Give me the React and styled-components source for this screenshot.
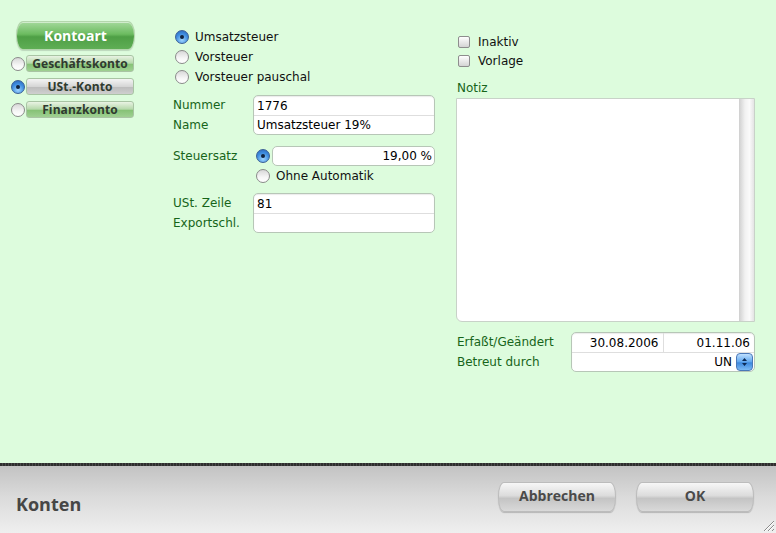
import React, { useState } from 'react';
import styled, { createGlobalStyle, css } from 'styled-components';

const GlobalStyle = createGlobalStyle`
  html, body { margin: 0; padding: 0; }
  body {
    width: 776px;
    height: 533px;
    overflow: hidden;
    font-family: "DejaVu Sans", Verdana, sans-serif;
    font-size: 12px;
  }
`;

const Window = styled.div`
  display: flex;
  flex-direction: column;
  width: 776px;
  height: 533px;
`;

const Main = styled.div`
  height: 463px;
  background: #ddfcdd;
  display: grid;
  grid-template-columns: 126px 264px 300px;
  column-gap: 35px;
  padding-left: 11px;
  box-sizing: border-box;
  & > :nth-child(3) { margin-left: -15px; }
`;

const Column = styled.div`
  display: flex;
  flex-direction: column;
  padding-top: ${p => p.$top}px;
`;

/* ---- left column ---- */

const KontoartButton = styled.div`
  margin-left: 5px;
  width: 119px;
  height: 29px;
  box-sizing: border-box;
  border-radius: 7px / 14px;
  border: 1px solid #b4d6ad;
  background: linear-gradient(#a4d99c 0%, #6cbb60 45%, #4e9f45 55%, #5fae55 100%);
  box-shadow: inset 0 1px 0 rgba(255,255,255,0.5), 0 1px 1px rgba(0,0,0,0.15);
  display: flex;
  align-items: center;
  justify-content: center;
  color: #fff;
  font-family: "Open Sans", "Liberation Sans", sans-serif;
  font-weight: 700;
  font-size: 14px;
`;

const KindList = styled.div`
  display: flex;
  flex-direction: column;
  gap: 6px;
  margin-top: 5px;
`;

const KindRow = styled.div`
  display: flex;
  align-items: center;
  gap: 1px;
`;

const KindButton = styled.div`
  width: 108px;
  height: 17px;
  box-sizing: border-box;
  border-radius: 3px;
  border: 1px solid #a9c4a4;
  display: flex;
  align-items: center;
  justify-content: center;
  font-family: "Open Sans", "Liberation Sans", sans-serif;
  font-weight: 700;
  font-size: 12px;
  color: #2f3a2f;
  letter-spacing: 0.1px;
  ${p => p.$active
    ? css`background: linear-gradient(#f4f4f4 0%, #d6d6d6 50%, #bdbdbd 55%, #cfcfcf 100%);`
    : css`background: linear-gradient(#e9f3e4 0%, #b6d9ab 48%, #86c276 55%, #9fd092 100%);`}
`;

/* ---- radios & checkboxes ---- */

const Radio = styled.span`
  flex: none;
  width: 14px;
  height: 14px;
  box-sizing: border-box;
  border-radius: 50%;
  border: 1px solid #8a8a8a;
  display: inline-flex;
  align-items: center;
  justify-content: center;
  ${p => p.$on
    ? css`
      background: radial-gradient(circle at 50% 75%, #9fd4ff 0%, #3f8ee0 55%, #2a63b8 100%);
      border-color: #3a5f96;
      &::after {
        content: "";
        width: 4px;
        height: 4px;
        border-radius: 50%;
        background: #10233f;
      }`
    : css`background: linear-gradient(#d8d8d8 0%, #f6f6f6 60%, #ffffff 100%);`}
`;

const Check = styled.span`
  flex: none;
  width: 12px;
  height: 12px;
  box-sizing: border-box;
  border-radius: 2px;
  border: 1px solid #8d8d8d;
  background: linear-gradient(#ffffff 0%, #e9e9e9 50%, #d4d4d4 100%);
`;

const OptionRow = styled.div`
  display: flex;
  align-items: center;
  height: ${p => p.$h || 20}px;
  gap: 6px;
  padding-left: ${p => p.$indent || 3}px;
  color: #111;
`;

const CheckText = styled.span`
  margin-left: 2px;
`;

/* ---- fields ---- */

const FieldBlock = styled.div`
  display: flex;
  margin-top: ${p => p.$mt || 0}px;
`;

const Labels = styled.div`
  width: ${p => p.$w}px;
  flex: none;
  display: flex;
  flex-direction: column;
`;

const Label = styled.div`
  height: 20px;
  line-height: 20px;
  color: #17651a;
  padding-left: 1px;
`;

const Box = styled.div`
  width: ${p => p.$w}px;
  box-sizing: border-box;
  background: #fff;
  border: 1px solid #b7c6b7;
  border-radius: 5px;
  box-shadow: inset 0 1px 1px rgba(0,0,0,0.08);
  display: flex;
  flex-direction: column;
  overflow: hidden;
`;

const BoxRow = styled.div`
  height: 19px;
  display: flex;
  align-items: center;
  box-sizing: border-box;
  padding: 0 ${p => p.$pr ?? 4}px 0 ${p => p.$pl ?? 3}px;
  justify-content: ${p => p.$right ? 'flex-end' : 'flex-start'};
  color: #000;
  & + & { border-top: 1px solid #dedede; height: 19px; }
`;

const Cell = styled.div`
  flex: 1;
  height: 100%;
  display: flex;
  align-items: center;
  justify-content: flex-end;
  padding-right: 4px;
  & + & { border-left: 1px solid #dedede; }
`;

const RateRow = styled.div`
  display: flex;
  align-items: center;
  margin-top: 11px;
`;

const RateInput = styled.div`
  width: 163px;
  height: 20px;
  margin-left: 2px;
  box-sizing: border-box;
  background: #fff;
  border: 1px solid #b7c6b7;
  border-radius: 5px;
  display: flex;
  align-items: center;
  justify-content: flex-end;
  padding-right: 2px;
`;

/* ---- right column ---- */

const NoteLabel = styled.div`
  color: #17651a;
  height: 20px;
  line-height: 20px;
  margin-top: 7px;
  padding-left: 1px;
`;

const NoteArea = styled.div`
  width: 299px;
  height: 224px;
  box-sizing: border-box;
  background: #fff;
  border: 1px solid #c8d2c8;
  border-radius: 0 0 0 6px;
  display: flex;
  justify-content: flex-end;
`;

const Scrollbar = styled.div`
  width: 15px;
  height: 100%;
  background: linear-gradient(90deg, #cfcfcf 0%, #f1f1f1 40%, #fafafa 70%, #e4e4e4 100%);
`;

const Stepper = styled.div`
  width: 17px;
  height: 18px;
  margin-left: 4px;
  box-sizing: border-box;
  border-radius: 4px;
  border: 1px solid #4a78b8;
  background: linear-gradient(#bfe0ff 0%, #5fa6ee 50%, #3c87dc 55%, #7cbaf5 100%);
  display: flex;
  align-items: center;
  justify-content: center;
`;

/* ---- footer ---- */

const Divider = styled.div`
  height: 3px;
  background: repeating-linear-gradient(90deg, #2e2e2e 0 2px, #4a4a4a 2px 3px);
`;

const Footer = styled.div`
  flex: 1;
  position: relative;
  background: linear-gradient(#c3c3c3 0%, #dadada 45%, #efefef 100%);
  display: flex;
  align-items: center;
  padding: 0 22px 0 16px;
`;

const Title = styled.div`
  font-family: "Open Sans", "Liberation Sans", sans-serif;
  font-weight: 700;
  font-size: 18px;
  color: #464646;
  margin-top: 8px;
  flex: 1;
`;

const Buttons = styled.div`
  display: flex;
  gap: 20px;
  margin-bottom: 5px;
`;

const FooterButton = styled.div`
  width: 118px;
  height: 30px;
  box-sizing: border-box;
  border-radius: 6px / 14px;
  border: 1px solid #bcbcbc;
  background: linear-gradient(#f7f7f7 0%, #dcdcdc 45%, #c4c4c4 55%, #d9d9d9 100%);
  box-shadow: 0 1px 1px rgba(0,0,0,0.2);
  display: flex;
  align-items: center;
  justify-content: center;
  padding-bottom: 3px;
  font-family: "Open Sans", "Liberation Sans", sans-serif;
  font-weight: 700;
  font-size: 14px;
  color: #4a4a4a;
`;

const Grip = styled.svg`
  position: absolute;
  right: 1px;
  bottom: 1px;
`;

const kinds = ['Geschäftskonto', 'USt.-Konto', 'Finanzkonto'];
const taxTypes = ['Umsatzsteuer', 'Vorsteuer', 'Vorsteuer pauschal'];

export default function App() {
  const [kind, setKind] = useState(1);
  const [tax, setTax] = useState(0);

  return (
    <>
      <GlobalStyle />
      <Window>
        <Main>
          <Column $top={21}>
            <KontoartButton>Kontoart</KontoartButton>
            <KindList>
              {kinds.map((k, i) => (
                <KindRow key={k} onClick={() => setKind(i)}>
                  <Radio $on={kind === i} />
                  <KindButton $active={kind === i}>{k}</KindButton>
                </KindRow>
              ))}
            </KindList>
          </Column>

          <Column $top={27}>
            {taxTypes.map((t, i) => (
              <OptionRow key={t} onClick={() => setTax(i)}>
                <Radio $on={tax === i} />
                {t}
              </OptionRow>
            ))}
            <FieldBlock $mt={8}>
              <Labels $w={81}>
                <Label>Nummer</Label>
                <Label>Name</Label>
              </Labels>
              <Box $w={182}>
                <BoxRow>1776</BoxRow>
                <BoxRow>Umsatzsteuer 19%</BoxRow>
              </Box>
            </FieldBlock>
            <RateRow>
              <Labels $w={84}>
                <Label>Steuersatz</Label>
              </Labels>
              <Radio $on />
              <RateInput>19,00 %</RateInput>
            </RateRow>
            <OptionRow $indent={84}>
              <Radio />
              Ohne Automatik
            </OptionRow>
            <FieldBlock $mt={7}>
              <Labels $w={81}>
                <Label>USt. Zeile</Label>
                <Label>Exportschl.</Label>
              </Labels>
              <Box $w={182}>
                <BoxRow>81</BoxRow>
                <BoxRow />
              </Box>
            </FieldBlock>
          </Column>

          <Column $top={32}>
            <OptionRow $h={19} $indent={2}>
              <Check />
              <CheckText>Inaktiv</CheckText>
            </OptionRow>
            <OptionRow $h={20} $indent={2}>
              <Check />
              <CheckText>Vorlage</CheckText>
            </OptionRow>
            <NoteLabel>Notiz</NoteLabel>
            <NoteArea>
              <Scrollbar />
            </NoteArea>
            <FieldBlock $mt={10}>
              <Labels $w={115}>
                <Label>Erfaßt/Geändert</Label>
                <Label>Betreut durch</Label>
              </Labels>
              <Box $w={184}>
                <BoxRow $pl={0} $pr={0}>
                  <Cell>30.08.2006</Cell>
                  <Cell>01.11.06</Cell>
                </BoxRow>
                <BoxRow $right $pr={1}>
                  UN
                  <Stepper>
                    <svg width="7" height="10" viewBox="0 0 7 10">
                      <path d="M3.5 1 L6 4 L1 4 Z M3.5 9 L6 6 L1 6 Z" fill="#0d2a55" />
                    </svg>
                  </Stepper>
                </BoxRow>
              </Box>
            </FieldBlock>
          </Column>
        </Main>
        <Divider />
        <Footer>
          <Title>Konten</Title>
          <Buttons>
            <FooterButton>Abbrechen</FooterButton>
            <FooterButton>OK</FooterButton>
          </Buttons>
          <Grip width="13" height="13" viewBox="0 0 13 13">
            <path d="M12 2 L2 12 M12 6 L6 12 M12 10 L10 12" stroke="#8a8a8a" strokeWidth="1" />
            <path d="M12 3 L3 12 M12 7 L7 12" stroke="#ffffff" strokeWidth="1" />
          </Grip>
        </Footer>
      </Window>
    </>
  );
}
